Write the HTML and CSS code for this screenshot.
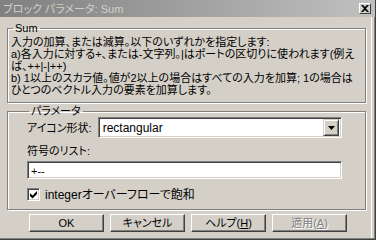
FILE: index.html
```html
<!DOCTYPE html>
<html lang="ja">
<head>
  <meta charset="UTF-8" />
  <title>ブロック パラメータ: Sum</title>
  <link rel="stylesheet" href="styles.css">
</head>
<body>
  <div class="dialog">
    <div class="titlebar">
      <span class="title">ブロック パラメータ: Sum</span>
      <span class="close-btn">
        <svg width="8" height="7" viewBox="0 0 8 7"><path d="M0 0h2l2 2 2-2h2L5 3.5 8 7H6L4 5 2 7H0l3-3.5z" fill="#000"/></svg>
      </span>
    </div>

    <div class="content">
      <fieldset class="group group-sum">
        <legend>Sum</legend>
        <p class="desc">入力の加算、または減算。以下のいずれかを指定します:<br>a)各入力に対する+、または-文字列。|はポートの区切りに使われます(例え<br>ば、++|-|++)<br>b) 1以上のスカラ値。値が2以上の場合はすべての入力を加算; 1の場合は<br>ひとつのベクトル入力の要素を加算します。</p>
      </fieldset>

      <fieldset class="group group-params">
        <legend>パラメータ</legend>
        <div class="param-row">
          <span class="label">アイコン形状:</span>
          <div class="combo">
            <span class="combo-value">rectangular</span>
            <span class="combo-btn">
              <svg width="7" height="4" viewBox="0 0 7 4"><path d="M0 0h7L3.5 4z" fill="#000"/></svg>
            </span>
          </div>
        </div>
        <div class="label field-label">符号のリスト:</div>
        <div class="textbox">+--</div>
        <div class="check-row">
          <span class="checkbox">
            <svg width="9" height="9" viewBox="0 0 9 9"><path d="M1 3l2.5 2.5L8 1v3L3.5 8.5 1 6z" fill="#000"/></svg>
          </span>
          <span>integerオーバーフローで飽和</span>
        </div>
      </fieldset>

      <div class="buttons">
        <button class="btn">OK</button>
        <button class="btn">キャンセル</button>
        <button class="btn">ヘルプ(<u>H</u>)</button>
        <button class="btn disabled">適用(<u>A</u>)</button>
      </div>
    </div>
  </div>
</body>
</html>
```

FILE: styles.css
```css
:root {
  --face: #d4d0c8;
  --shadow: #808080;
  --dark: #404040;
  --light: #ffffff;
}

* {
  box-sizing: border-box;
}

body {
  margin: 0;
  background: var(--face);
  font-family: "Liberation Sans", "Noto Sans CJK JP", sans-serif;
  font-size: 11px;
  line-height: 12px;
  color: #000;
  font-feature-settings: "palt";
}

.dialog {
  width: 376px;
  height: 240px;
  background: var(--face);
  border-right: 1px solid var(--dark);
  border-bottom: 1px solid var(--dark);
  box-shadow: inset -1px -1px 0 var(--shadow), inset -3px 0 0 var(--face), inset -4px 0 0 var(--light);
  display: flex;
  flex-direction: column;
}

.titlebar {
  height: 17px;
  background: linear-gradient(to right, #808080, #c0c0c0);
  display: flex;
  align-items: center;
  justify-content: space-between;
  padding: 0 4px 0 3px;
}

.title {
  color: var(--face);
  white-space: nowrap;
}

.close-btn {
  width: 12px;
  height: 11px;
  background: var(--face);
  border-top: 1px solid var(--light);
  border-left: 1px solid var(--light);
  border-right: 1px solid var(--dark);
  border-bottom: 1px solid var(--dark);
  display: flex;
  align-items: center;
  justify-content: center;
}

.content {
  padding: 5px 9px 0 7px;
  display: flex;
  flex-direction: column;
}

.group {
  margin: 0;
  border: 1px solid var(--shadow);
  box-shadow: inset 1px 1px 0 var(--light), 1px 1px 0 var(--light);
  min-width: 0;
}

.group legend {
  padding: 0 2px;
  margin-left: 2px;
  line-height: 12px;
}

.group-sum {
  padding: 2px 2px 6px 3px;
}

.desc {
  margin: 0;
  white-space: nowrap;
}

.group-params {
  margin-top: 2px;
  padding: 0 23px 8px 19px;
}

.param-row {
  display: flex;
  align-items: center;
  gap: 6px;
}

.combo {
  flex: 1;
  height: 21px;
  background: #fff;
  border-top: 1px solid var(--shadow);
  border-left: 1px solid var(--shadow);
  border-right: 1px solid var(--light);
  border-bottom: 1px solid var(--light);
  box-shadow: inset 1px 1px 0 var(--dark), inset -1px -1px 0 var(--face);
  display: flex;
  align-items: center;
  padding: 2px 2px 2px 4px;
}

.combo-value {
  flex: 1;
  font-size: 12px;
}

.combo-btn {
  width: 16px;
  height: 17px;
  background: var(--face);
  border-top: 1px solid var(--face);
  border-left: 1px solid var(--face);
  border-right: 1px solid var(--dark);
  border-bottom: 1px solid var(--dark);
  box-shadow: inset 1px 1px 0 var(--light), inset -1px -1px 0 var(--shadow);
  display: flex;
  align-items: center;
  justify-content: center;
}

.field-label {
  margin-top: 7px;
}

.textbox {
  margin-top: 4px;
  height: 18px;
  background: #fff;
  border-top: 1px solid var(--shadow);
  border-left: 1px solid var(--shadow);
  border-right: 1px solid var(--light);
  border-bottom: 1px solid var(--light);
  box-shadow: inset 1px 1px 0 var(--dark), inset -1px -1px 0 var(--face);
  padding: 3px 3px;
}

.check-row {
  margin-top: 9px;
  display: flex;
  align-items: center;
  gap: 5px;
  white-space: nowrap;
  font-size: 12px;
}

.checkbox {
  width: 13px;
  height: 13px;
  background: #fff;
  border-top: 1px solid var(--shadow);
  border-left: 1px solid var(--shadow);
  border-right: 1px solid var(--light);
  border-bottom: 1px solid var(--light);
  box-shadow: inset 1px 1px 0 var(--dark), inset -1px -1px 0 var(--face);
  display: flex;
  align-items: center;
  justify-content: center;
}

.buttons {
  margin-top: 4px;
  padding-left: 22px;
  display: flex;
  gap: 6px;
}

.btn {
  width: 75px;
  height: 18px;
  padding: 0;
  font: inherit;
  color: #000;
  background: var(--face);
  border-top: 1px solid var(--light);
  border-left: 1px solid var(--light);
  border-right: 1px solid var(--dark);
  border-bottom: 1px solid var(--dark);
  box-shadow: inset -1px -1px 0 var(--shadow);
}

.btn.disabled {
  color: var(--shadow);
  text-shadow: 1px 1px 0 var(--light);
}
```
